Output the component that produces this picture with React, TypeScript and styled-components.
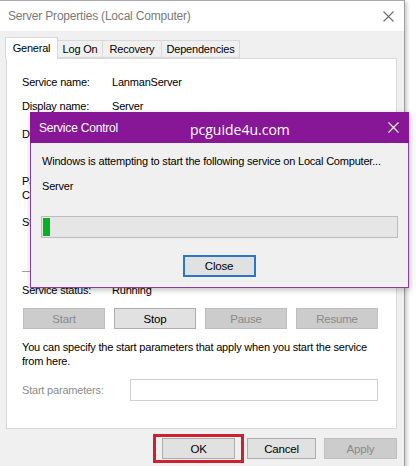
import React from 'react';
import styled, { createGlobalStyle } from 'styled-components';

const GlobalStyle = createGlobalStyle`
  html, body {
    margin: 0;
    padding: 0;
    background: #fff;
    overflow: hidden;
  }
  body {
    font-family: 'Liberation Sans', Arial, sans-serif;
    font-size: 11px;
    letter-spacing: -0.2px;
    color: #000;
  }
`;

const Page = styled.div`
  position: relative;
  width: 416px;
  height: 466px;
  overflow: hidden;
`;

const Window = styled.div`
  width: 404px;
  height: 480px;
  border-top: 1px solid #a9a9a9;
  border-right: 1px solid #9c9c9c;
  box-shadow: 2px 2px 4px rgba(0, 0, 0, 0.22);
  background: #f0f0f0;
`;

const TitleBar = styled.div`
  height: 30px;
  background: #fff;
  display: flex;
  align-items: center;
  padding: 0 10px 0 8px;
`;

const Title = styled.div`
  font-size: 12px;
  color: #7a7a7a;
  flex: 1;
`;

const XIcon: React.FC<{ color: string }> = ({ color }) => (
  <svg width="11" height="11" viewBox="0 0 11 11">
    <path d="M0.5 0.5 L10.5 10.5 M10.5 0.5 L0.5 10.5" stroke={color} strokeWidth="1.1" fill="none" />
  </svg>
);

const TabRow = styled.div`
  display: flex;
  align-items: flex-end;
  height: 21px;
  margin-top: 6px;
  padding-left: 5px;
`;

const Tab = styled.div<{ $active?: boolean; $w: number }>`
  position: relative;
  z-index: ${(p) => (p.$active ? 1 : 0)};
  width: ${(p) => p.$w}px;
  height: ${(p) => (p.$active ? 22 : 18)}px;
  margin-bottom: ${(p) => (p.$active ? -1 : 0)}px;
  margin-left: -1px;
  box-sizing: border-box;
  border: 1px solid #d9d9d9;
  border-bottom: ${(p) => (p.$active ? 'none' : '1px solid #d9d9d9')};
  background: ${(p) => (p.$active ? '#fff' : '#f0f0f0')};
  display: flex;
  align-items: ${(p) => (p.$active ? 'flex-start' : 'center')};
  padding-top: ${(p) => (p.$active ? 4 : 0)}px;
  justify-content: center;
  &:first-child {
    margin-left: 0;
  }
`;

const Panel = styled.div`
  margin-left: 6px;
  width: 391px;
  height: 371px;
  box-sizing: border-box;
  background: #fff;
  border: 1px solid #d9d9d9;
  padding: 11px 0 0 15px;
  display: flex;
  flex-direction: column;
`;

const InfoRow = styled.div<{ $h: number; $mt?: number }>`
  display: flex;
  height: ${(p) => p.$h}px;
  line-height: ${(p) => p.$h}px;
  margin-top: ${(p) => p.$mt ?? 0}px;
  white-space: nowrap;
`;

const Label = styled.div`
  width: 90px;
  flex-shrink: 0;
`;

const Block = styled.div<{ $mt: number }>`
  margin-top: ${(p) => p.$mt}px;
  line-height: 14px;
  white-space: nowrap;
`;

const Separator = styled.div`
  margin-top: 39px;
  width: 360px;
  height: 1px;
  background: #a0a0a0;
`;

const ButtonRow = styled.div`
  display: flex;
  gap: 9px;
  margin-top: 9px;
  margin-left: 1px;
`;

const Button = styled.button<{ $w: number; $disabled?: boolean }>`
  width: ${(p) => p.$w}px;
  height: 21px;
  box-sizing: border-box;
  padding: 0;
  font-family: inherit;
  font-size: 11.5px;
  letter-spacing: -0.2px;
  border: 1px solid ${(p) => (p.$disabled ? '#bfbfbf' : '#adadad')};
  background: ${(p) => (p.$disabled ? '#cccccc' : '#e1e1e1')};
  color: ${(p) => (p.$disabled ? '#8a8a8a' : '#000')};
`;

const Paragraph = styled.div`
  margin-top: 11px;
  line-height: 14px;
  width: 365px;
`;

const ParamRow = styled.div`
  display: flex;
  align-items: center;
  margin-top: 11px;
`;

const ParamLabel = styled.div`
  width: 108px;
  color: #8c8c8c;
`;

const Input = styled.div`
  width: 248px;
  height: 22px;
  box-sizing: border-box;
  border: 1px solid #cfcfcf;
  background: #fff;
`;

const Footer = styled.div`
  display: flex;
  align-items: center;
  justify-content: flex-end;
  gap: 8px;
  padding-right: 7px;
  margin-top: 5px;
`;

const Highlight = styled.div`
  border: 3px solid #cf2030;
  padding: 1px 6px;
  margin-right: -5px;
  display: flex;
`;

const Dialog = styled.div`
  position: absolute;
  left: 30px;
  top: 112px;
  width: 379px;
  height: 176px;
  box-sizing: border-box;
  border: 1px solid #8a3f9b;
  border-top: none;
  background: #f0f0f0;
  box-shadow: 1px 2px 6px rgba(0, 0, 0, 0.25);
  display: flex;
  flex-direction: column;
`;

const DialogTitle = styled.div`
  height: 31px;
  margin: 0 -1px;
  background: #881798;
  color: #fff;
  display: flex;
  align-items: center;
  padding: 0 10px 0 9px;
`;

const DialogTitleText = styled.div`
  font-size: 12px;
  width: 151px;
`;

const Watermark = styled.div`
  font-family: 'Open Sans', 'Noto Sans', sans-serif;
  font-size: 14px;
  letter-spacing: 0;
  margin-top: 3px;
  flex: 1;
`;

const DialogBody = styled.div`
  padding: 10px 10px 0 11px;
  display: flex;
  flex-direction: column;
`;

const Message = styled.div<{ $mt?: number }>`
  line-height: 16px;
  margin-top: ${(p) => p.$mt ?? 0}px;
  white-space: nowrap;
`;

const Progress = styled.div`
  margin-top: 22px;
  margin-left: -1px;
  height: 22px;
  box-sizing: border-box;
  border: 1px solid #bcbcbc;
  background: #e6e6e6;
  padding: 1px;
  display: flex;
`;

const ProgressFill = styled.div`
  background: #06b025;
`;

const CloseButton = styled.button`
  align-self: center;
  margin-top: 17px;
  margin-left: -2px;
  width: 73px;
  height: 22px;
  box-sizing: border-box;
  padding: 0;
  font-family: inherit;
  font-size: 11.5px;
  letter-spacing: -0.2px;
  border: 2px solid #2a78c4;
  background: #e1e1e1;
  color: #000;
`;

const App: React.FC = () => {
  const progress = 2;
  return (
    <Page>
      <GlobalStyle />
      <Window>
        <TitleBar>
          <Title>Server Properties (Local Computer)</Title>
          <XIcon color="#6e6e6e" />
        </TitleBar>
        <TabRow>
          <Tab $active $w={53}>General</Tab>
          <Tab $w={46}>Log On</Tab>
          <Tab $w={60}>Recovery</Tab>
          <Tab $w={79}>Dependencies</Tab>
        </TabRow>
        <Panel>
          <InfoRow $h={24}>
            <Label>Service name:</Label>
            <div>LanmanServer</div>
          </InfoRow>
          <InfoRow $h={24}>
            <Label>Display name:</Label>
            <div>Server</div>
          </InfoRow>
          <InfoRow $h={24} $mt={4}>
            <Label>Description:</Label>
            <div>Supports file, print, and named-pipe sharing</div>
          </InfoRow>
          <Block $mt={28}>
            <div>Path to executable:</div>
            <div>C:\Windows\system32\svchost.exe -k netsvcs -p</div>
          </Block>
          <InfoRow $h={20} $mt={10}>
            <Label>Startup type:</Label>
            <div>Automatic</div>
          </InfoRow>
          <Separator />
          <InfoRow $h={18} $mt={9}>
            <Label>Service status:</Label>
            <div>Running</div>
          </InfoRow>
          <ButtonRow>
            <Button $w={82} $disabled>Start</Button>
            <Button $w={82}>Stop</Button>
            <Button $w={82} $disabled>Pause</Button>
            <Button $w={82} $disabled>Resume</Button>
          </ButtonRow>
          <Paragraph>
            You can specify the start parameters that apply when you start the service from here.
          </Paragraph>
          <ParamRow>
            <ParamLabel>Start parameters:</ParamLabel>
            <Input />
          </ParamRow>
        </Panel>
        <Footer>
          <Highlight>
            <Button $w={73}>OK</Button>
          </Highlight>
          <Button $w={69}>Cancel</Button>
          <Button $w={73} $disabled>Apply</Button>
        </Footer>
      </Window>
      <Dialog>
        <DialogTitle>
          <DialogTitleText>Service Control</DialogTitleText>
          <Watermark>pcguide4u.com</Watermark>
          <XIcon color="#ffffff" />
        </DialogTitle>
        <DialogBody>
          <Message>Windows is attempting to start the following service on Local Computer...</Message>
          <Message $mt={9}>Server</Message>
          <Progress>
            <ProgressFill style={{ width: `${progress}%` }} />
          </Progress>
          <CloseButton>Close</CloseButton>
        </DialogBody>
      </Dialog>
    </Page>
  );
};

export default App;
